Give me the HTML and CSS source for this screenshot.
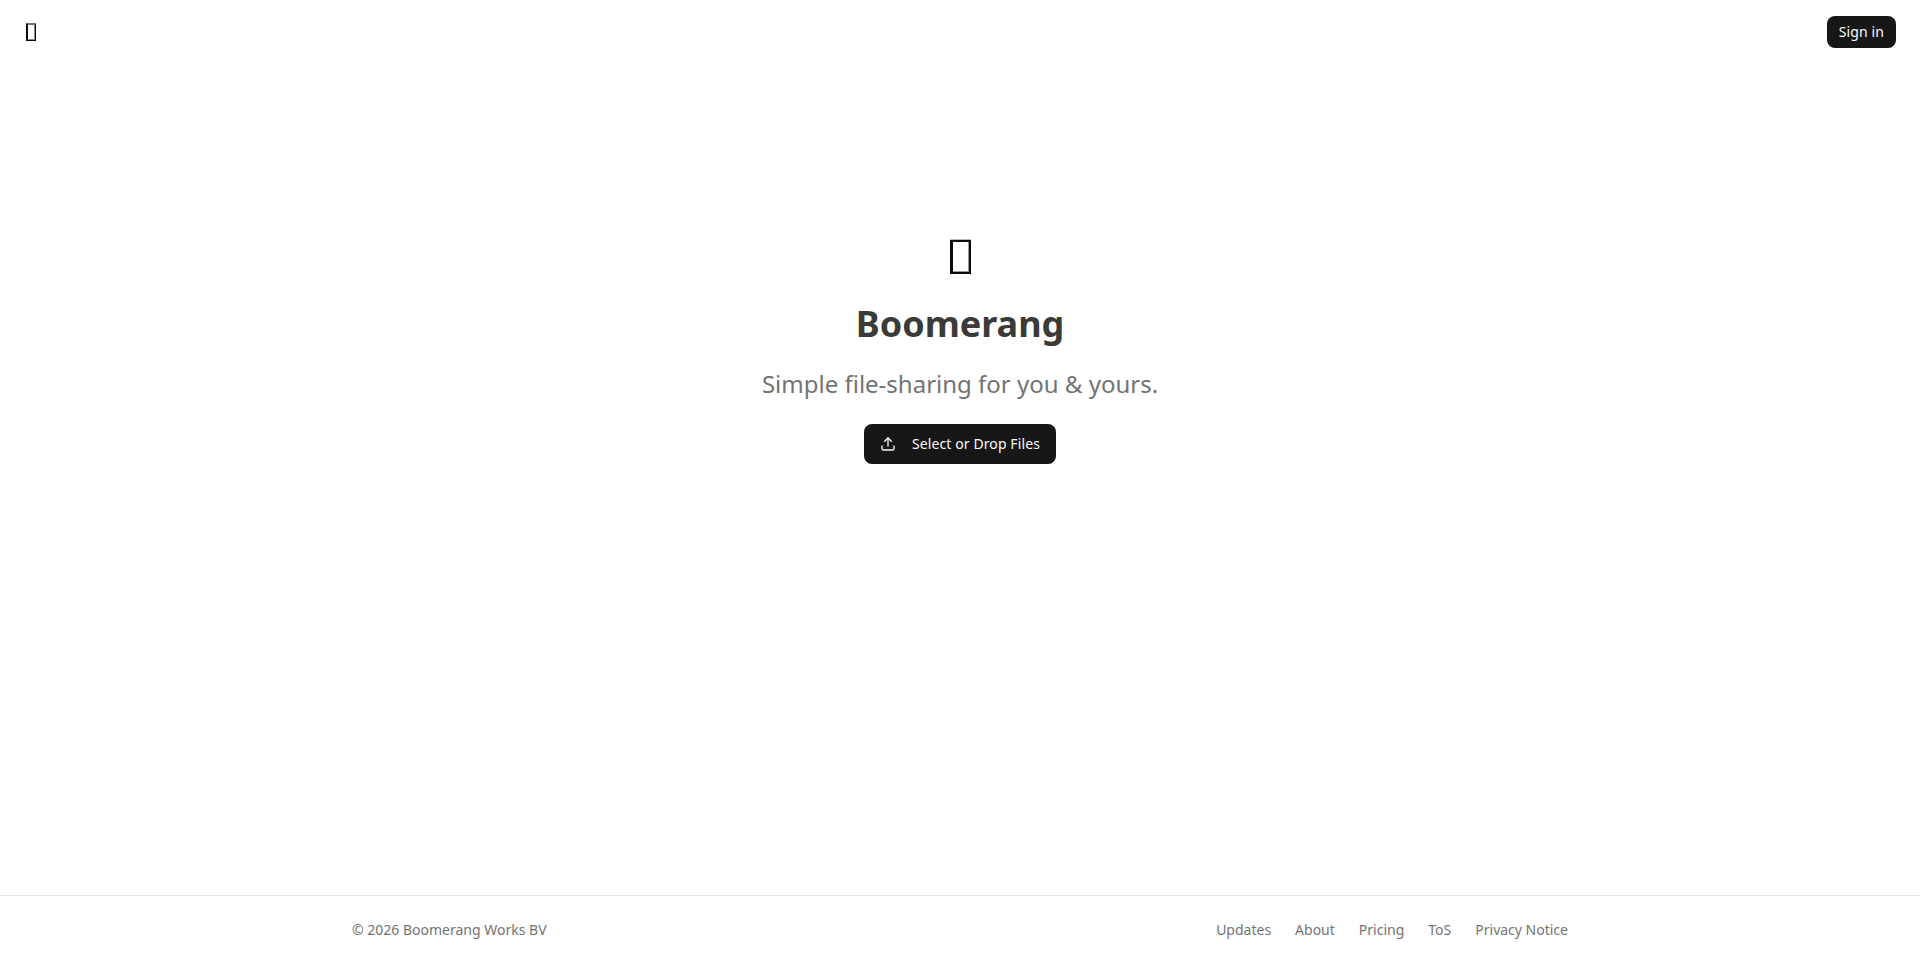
FILE: index.html
```html
<!DOCTYPE html>
<html lang="en">
<head>
<meta charset="utf-8">
<title>Boomerang</title>
<link rel="stylesheet" href="styles.css">
</head>
<body>
<div class="page">
  <header class="topbar">
    <a class="logo"><span class="tofu tofu-small"></span></a>
    <a class="signin">Sign in</a>
  </header>
  <main class="hero">
    <div class="hero-icon"><span class="tofu tofu-large"></span></div>
    <h1 class="title">Boomerang</h1>
    <p class="tagline">Simple file-sharing for you &amp; yours.</p>
    <button class="upload">
      <svg class="upload-icon" viewBox="0 0 24 24" fill="none" stroke="currentColor" stroke-width="2" stroke-linecap="round" stroke-linejoin="round"><path d="M12 3v12"/><path d="m17 8-5-5-5 5"/><path d="M21 15v4a2 2 0 0 1-2 2H5a2 2 0 0 1-2-2v-4"/></svg>
      <span>Select or Drop Files</span>
    </button>
  </main>
  <footer class="footer">
    <div class="footer-inner">
      <span>© 2026 Boomerang Works BV</span>
      <nav class="footer-links">
        <a>Updates</a>
        <a>About</a>
        <a>Pricing</a>
        <a>ToS</a>
        <a>Privacy Notice</a>
      </nav>
    </div>
  </footer>
</div>
</body>
</html>
```
FILE: styles.css
```css
* { box-sizing: border-box; }
html, body { margin: 0; height: 100%; background: #fff; }
body { font-family: "Noto Sans", sans-serif; color: #0a0a0a; }
.page { height: 964px; display: flex; flex-direction: column; overflow: hidden; }
.topbar { height: 64px; padding: 16px 24px; display: flex; justify-content: space-between; align-items: center; flex: none; }
.logo { display: flex; padding-left: 2px; }
.tofu { display: block; border-style: solid; border-color: #0a0a0a; background: #fff; }
.tofu-small { width: 10px; height: 18px; border-width: 2px 1px 1px 2px; border-top-color: #777; box-shadow: inset -1px -1px 0 #888; }
.tofu-large { width: 21px; height: 34px; margin-top: 1px; border-width: 2px 2px 2px 3px; box-shadow: 0 -1px 0 #bbb, inset -1px -1px 0 #999; }
.signin { height: 32px; padding: 0 12px 2px; display: flex; align-items: center; background: #171717; color: #fafafa; font-size: 14px; font-weight: 400; letter-spacing: 0.1px; border-radius: 8px; }
.hero { flex: 1; display: flex; flex-direction: column; align-items: center; padding-top: 175px; }
.hero-icon { height: 49px; }
.title { margin: 16px 0 0; font-size: 36px; line-height: 40px; font-weight: 700; color: #3a3a38; }
.tagline { margin: 24px 0 0; font-size: 24px; line-height: 32px; color: #737373; }
.upload { margin-top: 24px; height: 40px; padding: 0 16px 2px; display: flex; align-items: center; gap: 16px; border: 0; background: #171717; color: #fafafa; font-family: inherit; font-size: 14px; font-weight: 400; letter-spacing: 0.1px; border-radius: 8px; }
.upload-icon { width: 16px; height: 16px; flex: none; margin-top: 2px; }
.footer { flex: none; height: 69px; border-top: 1px solid #e5e5e5; }
.footer-inner { max-width: 1280px; margin: 0 auto; padding: 24px 32px; display: flex; justify-content: space-between; align-items: center; font-size: 14px; line-height: 20px; color: #737373; }
.footer-links { display: flex; gap: 24px; }
```
